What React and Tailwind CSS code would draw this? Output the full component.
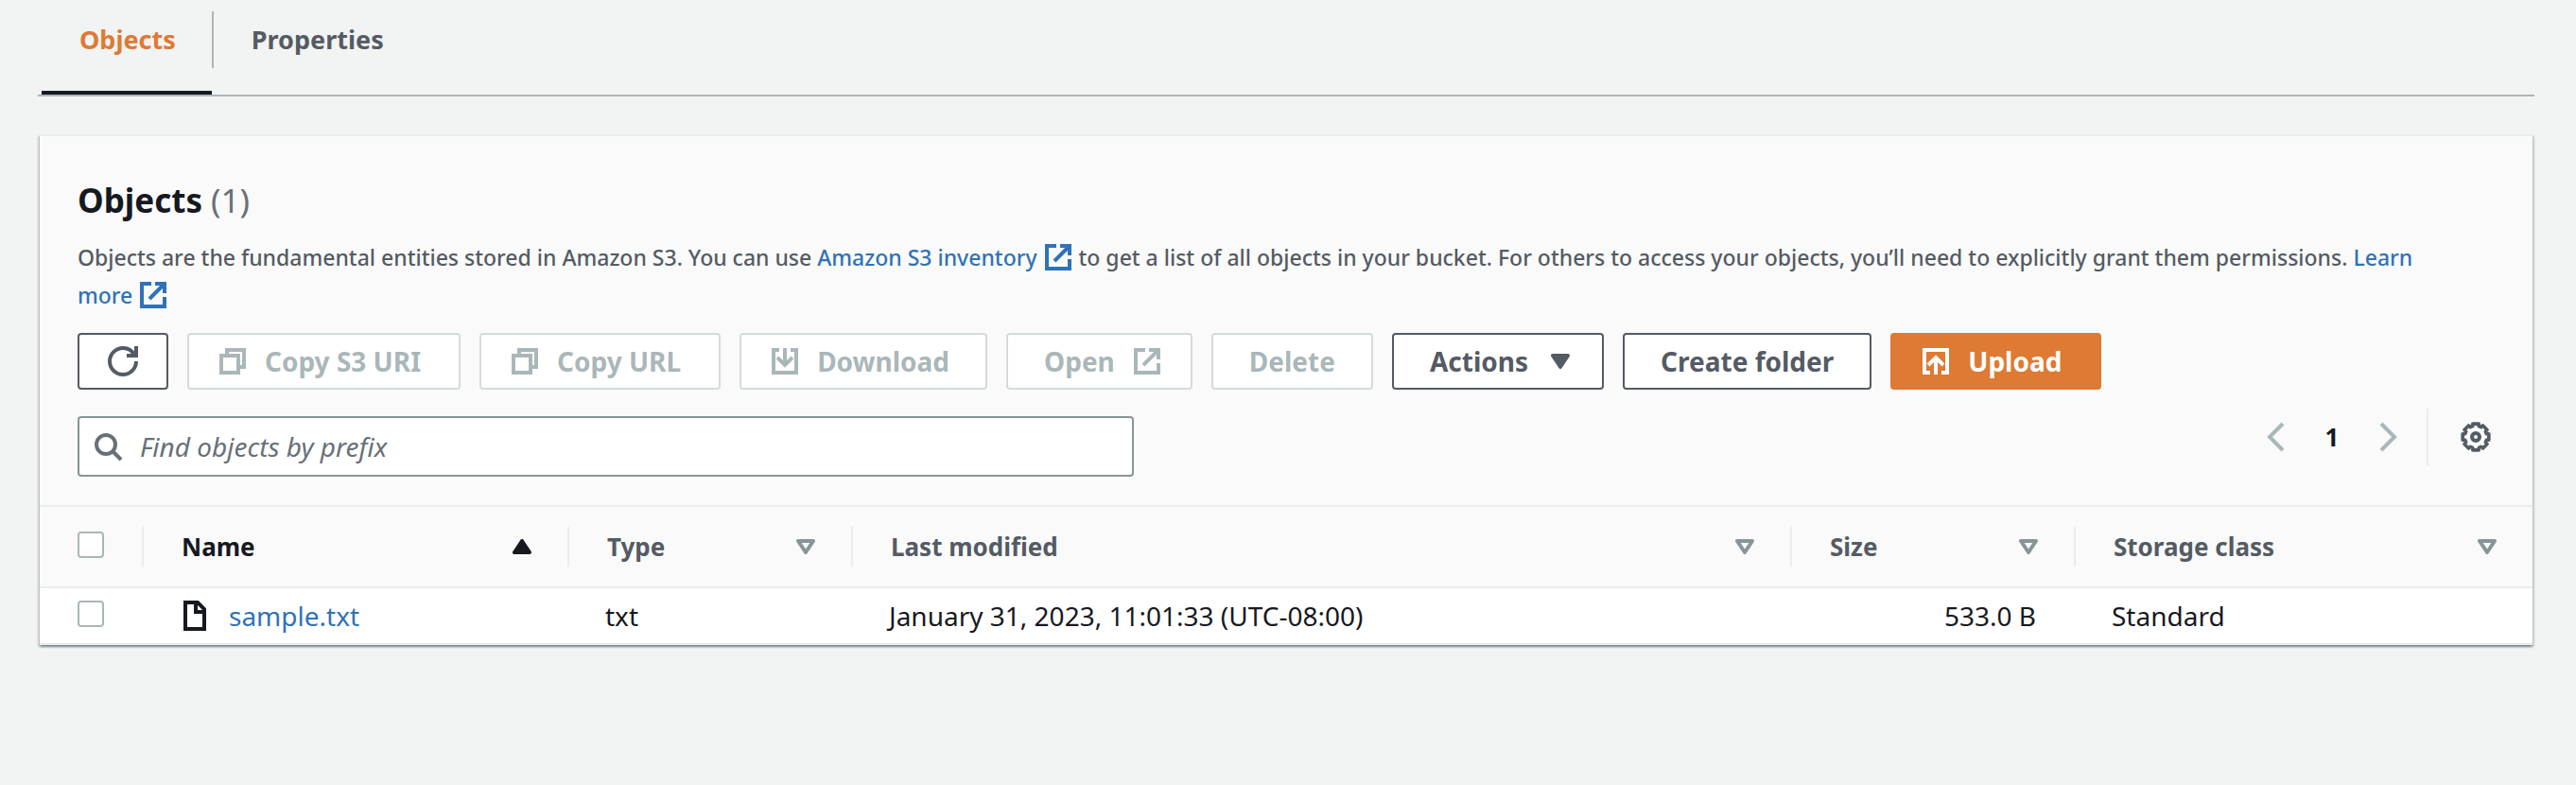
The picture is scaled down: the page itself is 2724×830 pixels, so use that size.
const ICONS = {
  refresh: "M10 5h5V0M15 8a7 7 0 1 1-7-7c2.7 0 5 1.400 6.300 4",
  copy: "M2 5h9v9H2zM5 5V2h9v9h-3",
  external: "M7 2H2v12h12V9M9 2h5v5M14 2L6 10",
  download: "M5 2H2v12h12V2h-3M8 1v9M4 6l4 4 4-4",
  upload: "M5 14H2V2h12v12h-3M8 15V6M4 10l4-4 4 4",
  search: "M7 2a5 5 0 1 0 0 10A5 5 0 1 0 7 2zM10.500 10.500L15 15",
  file: "M3 1h6.500L13 4.500V15H3zM8.500 1v5H13",
  left: "M12 1L5 8l7 7",
  right: "M4 1l7 7-7 7",
};

function Icon({ name, className = "" }) {
  return (
    <svg
      viewBox="0 0 16 16"
      className={`size-8 shrink-0 ${className}`}
      fill="none"
      stroke="currentColor"
      strokeWidth="2"
      aria-hidden="true"
    >
      <path d={ICONS[name]} />
    </svg>
  );
}

function Triangle({ up = false, filled = false, className = "" }) {
  return (
    <svg
      viewBox="0 0 10 8"
      className={`h-4 w-5 shrink-0 ${className}`}
      fill={filled ? "currentColor" : "none"}
      stroke="currentColor"
      strokeWidth="2"
      strokeLinejoin="round"
      aria-hidden="true"
    >
      <path d={up ? "M1 7h8L5 1z" : "M1 1h8L5 7z"} />
    </svg>
  );
}

const gearPoints = Array.from({ length: 8 }, (_, tooth) =>
  [[-13, 7.1], [13, 7.1], [16, 5.9], [29, 5.9]].map(([angle, radius]) => {
    const a = ((tooth * 45 + angle) * Math.PI) / 180;
    return `${(8 + radius * Math.sin(a)).toFixed(2)},${(8 - radius * Math.cos(a)).toFixed(2)}`;
  }).join(" ")
).join(" ");

function Gear() {
  return (
    <svg viewBox="0 0 16 16" className="size-8" fill="none" stroke="currentColor" aria-hidden="true">
      <polygon points={gearPoints} strokeWidth="1.800" strokeLinejoin="round" />
      <circle cx="8" cy="8" r="2" strokeWidth="2" />
    </svg>
  );
}

const BUTTON = "flex h-[60px] items-center rounded-sm border-2 text-[28px] font-bold whitespace-nowrap";
const NORMAL = "border-[#545b64] bg-white text-[#545b64]";
const DISABLED = "border-[#d5dbdb] bg-white text-[#aab7b8]";

function Header({ label, sort, active = false, last = false }) {
  return (
    <th scope="col" aria-sort={active ? "ascending" : "none"} className="border-y-2 border-[#eaeded] p-0">
      <div
        className={`flex h-[42px] items-center justify-between pr-[38px] pl-10 ${
          last ? "" : "border-r-2 border-[#eaeded]"
        } ${active ? "text-[#16191f]" : "text-[#545b64]"}`}
      >
        <span>{label}</span>
        <button type="button" aria-label={`Sort by ${sort}`} className={active ? "" : "text-[#879596]"}>
          <Triangle up={active} filled={active} />
        </button>
      </div>
    </th>
  );
}

function Checkbox({ label }) {
  return (
    <input
      type="checkbox"
      aria-label={label}
      className="mb-1 block size-7 appearance-none rounded-sm border-2 border-[#aab7b8] bg-white checked:bg-[#3072b6]"
    />
  );
}

const CELL = "border-b-2 border-[#eaeded] p-0";

export default function App() {
  return (
    <div className="min-h-screen bg-[#f2f3f3] pr-11 pl-10 font-['Noto_Sans','Open_Sans',sans-serif] text-[#16191f]">
      <div role="tablist" className="flex border-b-2 border-[#aab7b8] pl-1 text-[27px] font-bold">
        <button
          type="button"
          role="tab"
          aria-selected="true"
          className="h-[100px] border-b-4 border-[#16191f] pt-3 pb-6 text-[#de7a33]"
        >
          <span className="flex h-[60px] items-center pr-[38px] pl-10">Objects</span>
        </button>
        <button type="button" role="tab" aria-selected="false" className="h-[100px] pt-3 pb-7 text-[#545b64]">
          <span className="flex h-[60px] items-center border-l-2 border-[#aab7b8] px-10">Properties</span>
        </button>
      </div>

      <section className="mx-0.5 mt-10 border-t-2 border-[#eaeded] bg-[#fafafa] shadow-[0_2px_2px_rgba(0,28,36,0.3),2px_2px_2px_rgba(0,28,36,0.15),-2px_2px_2px_rgba(0,28,36,0.15)]">
        <div className="px-10 pt-11">
          <h2 className="text-[35px] leading-[48px] font-bold">
            Objects <span className="font-normal text-[#687078]">(1)</span>
          </h2>
          <p className="mt-4 mb-5 pr-14 text-[23px] leading-10 font-medium text-[#545b64]">
            Objects are the fundamental entities stored in Amazon S3. You can use{" "}
            <a href="#inventory" className="text-[#3072b6]">
              Amazon S3 inventory <Icon name="external" className="inline-block align-[-7px]" />
            </a>{" "}
            to get a list of all objects in your bucket. For others to access your objects, you’ll need to explicitly
            grant them permissions.{" "}
            <a href="#learn" className="text-[#3072b6]">
              Learn{" "}
              <span className="whitespace-nowrap">
                more <Icon name="external" className="inline-block align-[-7px]" />
              </span>
            </a>
          </p>

          <div className="flex flex-wrap gap-5">
            <button type="button" aria-label="Refresh" className={`${BUTTON} ${NORMAL} px-[30px]`}>
              <Icon name="refresh" />
            </button>
            <button type="button" disabled className={`${BUTTON} ${DISABLED} gap-[18px] pr-10 pl-[30px]`}>
              <Icon name="copy" />
              Copy S3 URI
            </button>
            <button type="button" disabled className={`${BUTTON} ${DISABLED} gap-[18px] pr-10 pl-[30px]`}>
              <Icon name="copy" />
              Copy URL
            </button>
            <button type="button" disabled className={`${BUTTON} ${DISABLED} gap-[18px] pr-[38px] pl-[30px]`}>
              <Icon name="download" />
              Download
            </button>
            <button type="button" disabled className={`${BUTTON} ${DISABLED} gap-[18px] pr-[30px] pl-[38px]`}>
              Open
              <Icon name="external" />
            </button>
            <button type="button" disabled className={`${BUTTON} ${DISABLED} px-[38px]`}>
              Delete
            </button>
            <button type="button" aria-haspopup="menu" className={`${BUTTON} ${NORMAL} gap-6 pr-[34px] pl-[38px]`}>
              Actions
              <Triangle filled />
            </button>
            <button type="button" className={`${BUTTON} ${NORMAL} px-[38px]`}>
              Create folder
            </button>
            <button
              type="button"
              className={`${BUTTON} gap-[18px] border-[#de7a33] bg-[#de7a33] pr-10 pl-[30px] text-white`}
            >
              <Icon name="upload" />
              Upload
            </button>
          </div>

          <div className="mt-5 flex items-start justify-between pb-[30px]">
            <label className="mt-2 flex h-16 w-[1117px] items-center gap-[18px] rounded-sm border-2 border-[#879596] bg-white pl-3.5 text-[#687078]">
              <Icon name="search" />
              <input
                type="text"
                aria-label="Find objects by prefix"
                placeholder="Find objects by prefix"
                className="min-w-0 flex-1 bg-transparent text-[28px] outline-none placeholder:text-[#687078] placeholder:italic"
              />
            </label>
            <div className="flex h-[60px] items-center pr-1">
              <button type="button" aria-label="Previous page" disabled className="text-[#aab7b8]">
                <Icon name="left" />
              </button>
              <button type="button" aria-current="page" className="w-[88px] text-center text-[26px] font-bold">
                1
              </button>
              <button type="button" aria-label="Next page" disabled className="text-[#aab7b8]">
                <Icon name="right" />
              </button>
              <div className="ml-6 flex h-[60px] items-center border-l-2 border-[#eaeded] pl-[34px]">
                <button type="button" aria-label="Preferences" className="text-[#545b64]">
                  <Gear />
                </button>
              </div>
            </div>
          </div>
        </div>

        <table className="w-full table-fixed border-separate border-spacing-0 text-left">
          <colgroup>
            <col className="w-[110px]" />
            <col className="w-[450px]" />
            <col className="w-[300px]" />
            <col />
            <col className="w-[300px]" />
            <col className="w-[483px]" />
          </colgroup>
          <thead className="text-[26px] font-bold">
            <tr className="h-[88px]">
              <th scope="col" className="border-y-2 border-[#eaeded] p-0">
                <div className="flex h-[42px] items-center border-r-2 border-[#eaeded] pl-10">
                  <Checkbox label="Select all objects" />
                </div>
              </th>
              <Header label="Name" sort="name" active />
              <Header label="Type" sort="type" />
              <Header label="Last modified" sort="last modified" />
              <Header label="Size" sort="size" />
              <Header label="Storage class" sort="storage class" last />
            </tr>
          </thead>
          <tbody className="bg-white text-[28px]">
            <tr className="h-[60px]">
              <td className={`${CELL} pl-10`}>
                <Checkbox label="Select sample.txt" />
              </td>
              <td className={`${CELL} pl-[38px]`}>
                <div className="flex items-center gap-5">
                  <Icon name="file" />
                  <a href="#sample" className="text-[#3072b6]">
                    sample.txt
                  </a>
                </div>
              </td>
              <td className={`${CELL} pl-[38px]`}>txt</td>
              <td className={`${CELL} pl-[38px]`}>January 31, 2023, 11:01:33 (UTC-08:00)</td>
              <td className={`${CELL} pr-[42px] text-right`}>533.0 B</td>
              <td className={`${CELL} pl-[38px]`}>Standard</td>
            </tr>
          </tbody>
        </table>
      </section>
    </div>
  );
}
